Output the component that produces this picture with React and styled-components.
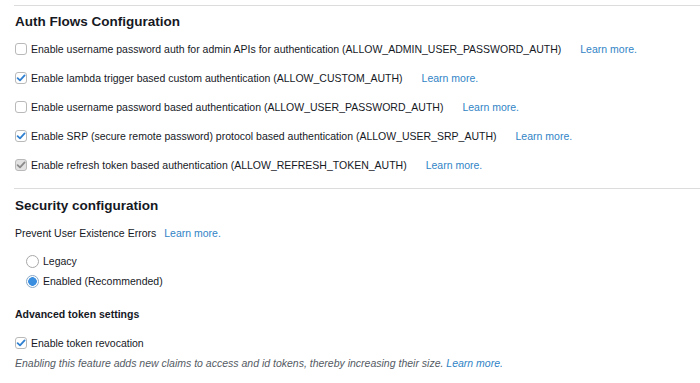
import React from 'react'
import styled, { createGlobalStyle } from 'styled-components'

const Global = createGlobalStyle`
  body {
    margin: 0;
    background: #fff;
    font-family: "Liberation Sans", Arial, sans-serif;
    color: #16191f;
  }
`

const flows = [
  { label: 'Enable username password auth for admin APIs for authentication (ALLOW_ADMIN_USER_PASSWORD_AUTH)', checked: false },
  { label: 'Enable lambda trigger based custom authentication (ALLOW_CUSTOM_AUTH)', checked: true },
  { label: 'Enable username password based authentication (ALLOW_USER_PASSWORD_AUTH)', checked: false },
  { label: 'Enable SRP (secure remote password) protocol based authentication (ALLOW_USER_SRP_AUTH)', checked: true },
  { label: 'Enable refresh token based authentication (ALLOW_REFRESH_TOKEN_AUTH)', checked: true, disabled: true },
]

const Check = ({ checked, disabled }) => (
  <Box $disabled={disabled}>
    {checked && (
      <svg width="10" height="10" viewBox="0 0 10 10">
        <path d="M1.6 5.2 L4 7.4 L8.6 2.4" fill="none" stroke={disabled ? '#8a8a8a' : '#2f80d1'} strokeWidth="1.8" strokeLinecap="round" strokeLinejoin="round" />
      </svg>
    )}
  </Box>
)

const App = () => {
  return (
    <Page>
      <Global />
      <Rule />
      <Heading>Auth Flows Configuration</Heading>
      <FlowList>
        {flows.map((f) => (
          <FlowRow key={f.label}>
            <Check checked={f.checked} disabled={f.disabled} />
            <span>{f.label}</span>
            <Link>Learn more.</Link>
          </FlowRow>
        ))}
      </FlowList>
      <Rule $gap={9} />
      <Heading $gap={7}>Security configuration</Heading>
      <Line>
        Prevent User Existence Errors<Link>Learn more.</Link>
      </Line>
      <RadioList>
        <RadioRow>
          <Radio />
          Legacy
        </RadioRow>
        <RadioRow>
          <Radio $on />
          Enabled (Recommended)
        </RadioRow>
      </RadioList>
      <SubHeading>Advanced token settings</SubHeading>
      <CheckRow>
        <Check checked />
        <span>Enable token revocation</span>
      </CheckRow>
      <Note>
        Enabling this feature adds new claims to access and id tokens, thereby increasing their size. <NoteLink>Learn more.</NoteLink>
      </Note>
    </Page>
  )
}

export default App

const Page = styled.div`
  width: 700px;
  height: 383px;
  overflow: hidden;
  padding-left: 14px;
  box-sizing: border-box;
  font-size: 10.5px;
`

const Rule = styled.div`
  height: 1px;
  background: #dcdcdc;
  margin-top: ${(p) => p.$gap ?? 5}px;
`

const Heading = styled.h2`
  margin: ${(p) => p.$gap ?? 6}px 0 0 1px;
  font-size: 13.5px;
  line-height: 20px;
  font-weight: 700;
`

const FlowList = styled.div`
  margin-top: 2px;
`

const FlowRow = styled.div`
  display: flex;
  align-items: center;
  height: 29px;
  gap: 4px;
  white-space: nowrap;

  a {
    margin-left: 15px;
  }
`

const Box = styled.span`
  width: 12px;
  height: 12px;
  border: 1px solid #b9b9b9;
  border-radius: 3px;
  box-sizing: border-box;
  display: inline-flex;
  align-items: center;
  justify-content: center;
  flex-shrink: 0;
  margin-left: 1px;
  background: ${(p) => (p.$disabled ? '#e2e2e2' : '#fff')};
`

const Link = styled.a`
  color: #3184c6;
  margin-left: 8px;
  cursor: pointer;
`

const Line = styled.div`
  margin-top: 9px;
  line-height: 16px;
  padding-left: 1px;
`

const RadioList = styled.div`
  margin-top: 10px;
  padding-left: 12px;
`

const RadioRow = styled.div`
  display: flex;
  align-items: center;
  gap: 4px;
  height: 20px;
`

const Radio = styled.span`
  width: 13px;
  height: 13px;
  border-radius: 50%;
  box-sizing: border-box;
  border: 1px solid ${(p) => (p.$on ? '#8aa9c6' : '#a8a8a8')};
  background: ${(p) => (p.$on ? 'radial-gradient(circle, #3a8ee0 0 4px, #fff 4.6px)' : '#fff')};
`

const SubHeading = styled.div`
  margin-top: 15px;
  line-height: 16px;
  font-weight: 700;
  padding-left: 1px;
`

const CheckRow = styled.div`
  display: flex;
  align-items: center;
  gap: 4px;
  height: 20px;
  margin-top: 11px;
`

const Note = styled.div`
  margin-top: 2px;
  line-height: 16px;
  font-style: italic;
  color: #545b64;
  padding-left: 1px;
`

const NoteLink = styled.a`
  color: #3184c6;
`
